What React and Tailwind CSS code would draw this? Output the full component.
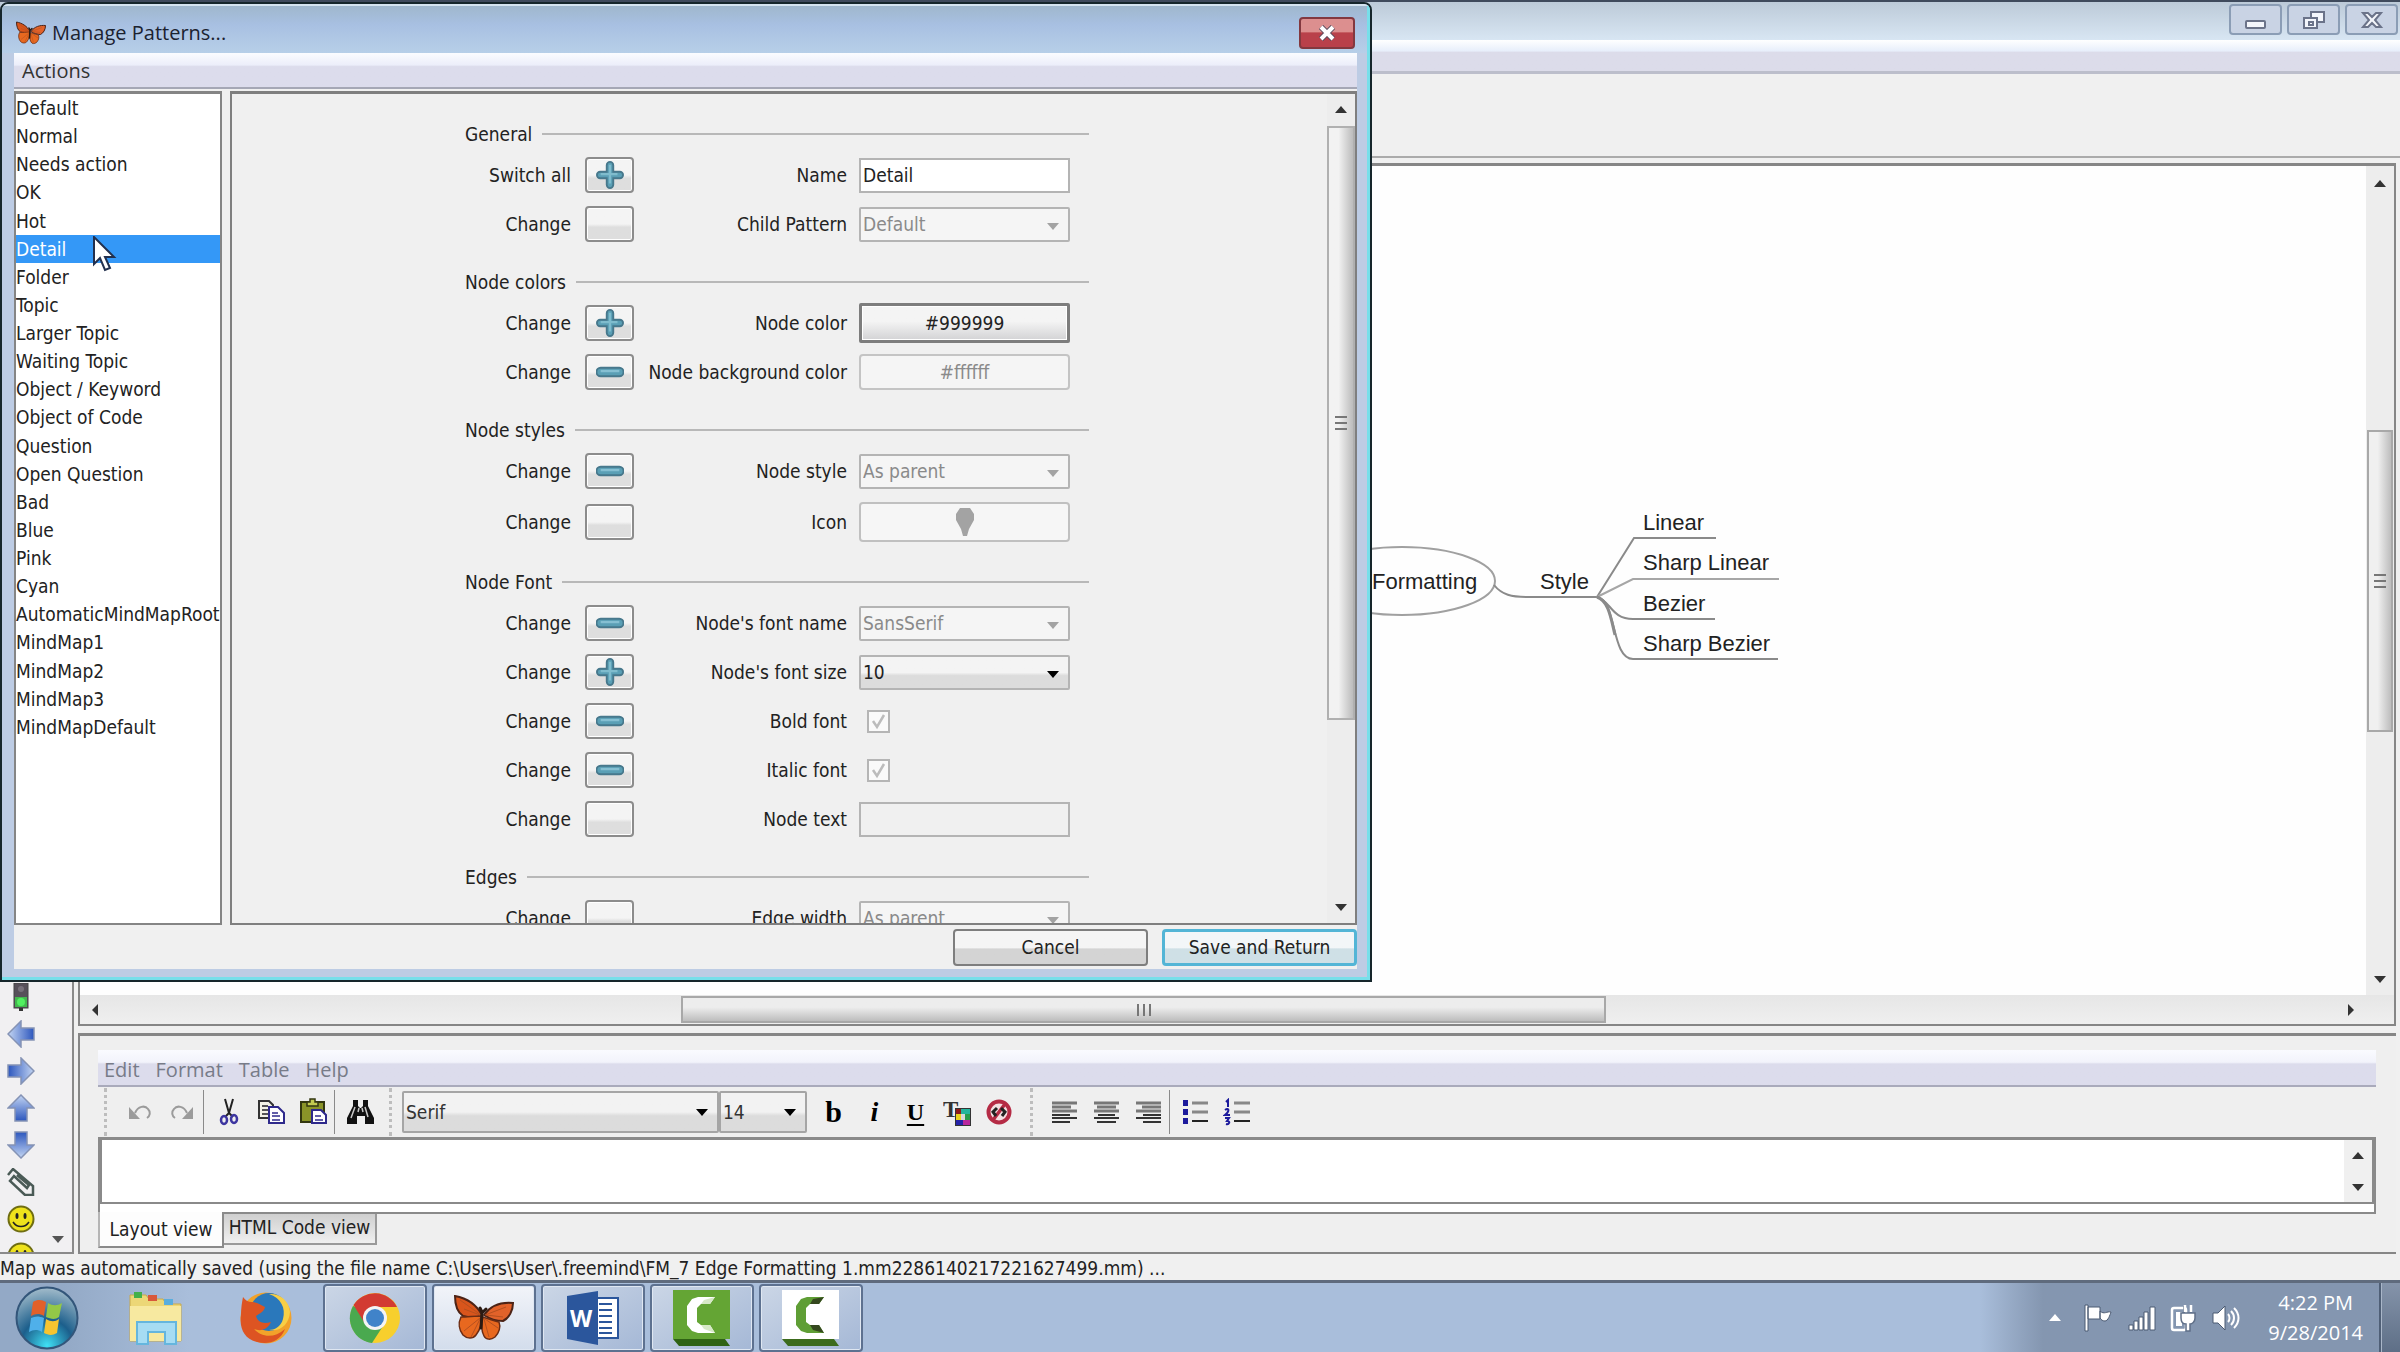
import React from 'react';

const PATTERNS = [
  'Default', 'Normal', 'Needs action', 'OK', 'Hot', 'Detail', 'Folder', 'Topic',
  'Larger Topic', 'Waiting Topic', 'Object / Keyword', 'Object of Code', 'Question',
  'Open Question', 'Bad', 'Blue', 'Pink', 'Cyan', 'AutomaticMindMapRoot',
  'MindMap1', 'MindMap2', 'MindMap3', 'MindMapDefault',
];

const GROUPS = [
  {
    title: 'General',
    rows: [
      { action: 'Switch all', mark: 'plus', label: 'Name', kind: 'text', value: 'Detail' },
      { action: 'Change', mark: '', label: 'Child Pattern', kind: 'select', value: 'Default', disabled: true },
    ],
  },
  {
    title: 'Node colors',
    rows: [
      { action: 'Change', mark: 'plus', label: 'Node color', kind: 'color', value: '#999999' },
      { action: 'Change', mark: 'minus', label: 'Node background color', kind: 'color', value: '#ffffff', disabled: true },
    ],
  },
  {
    title: 'Node styles',
    rows: [
      { action: 'Change', mark: 'minus', label: 'Node style', kind: 'select', value: 'As parent', disabled: true },
      { action: 'Change', mark: '', label: 'Icon', kind: 'icon', disabled: true },
    ],
  },
  {
    title: 'Node Font',
    rows: [
      { action: 'Change', mark: 'minus', label: "Node's font name", kind: 'select', value: 'SansSerif', disabled: true },
      { action: 'Change', mark: 'plus', label: "Node's font size", kind: 'select', value: '10' },
      { action: 'Change', mark: 'minus', label: 'Bold font', kind: 'check', disabled: true },
      { action: 'Change', mark: 'minus', label: 'Italic font', kind: 'check', disabled: true },
      { action: 'Change', mark: '', label: 'Node text', kind: 'text', value: '', disabled: true },
    ],
  },
  {
    title: 'Edges',
    rows: [
      { action: 'Change', mark: '', label: 'Edge width', kind: 'select', value: 'As parent', disabled: true },
    ],
  },
];

const NODES = [
  { text: 'Formatting', x: 71, y: 70 },
  { text: 'Style', x: 239, y: 70 },
  { text: 'Linear', x: 342, y: 11 },
  { text: 'Sharp Linear', x: 342, y: 51 },
  { text: 'Bezier', x: 342, y: 92 },
  { text: 'Sharp Bezier', x: 342, y: 132 },
];

/* ---------- small shared parts ---------- */

const Triangle = ({ dir = 'down', color = '#333' }) => {
  const points = {
    down: '1,4 13,4 7,11',
    up: '1,10 13,10 7,3',
    left: '10,1 10,13 4,7',
    right: '4,1 4,13 10,7',
  };
  return (
    <svg width="14" height="14" viewBox="0 0 14 14" aria-hidden="true" className="shrink-0">
      <polygon points={points[dir]} fill={color} />
    </svg>
  );
};

const Mark = ({ type }) => {
  if (!type) return null;
  const d = type === 'plus'
    ? 'M10.500 3.500a3.500 3.500 0 0 1 7 0v7h7a3.500 3.500 0 0 1 0 7h-7v7a3.500 3.500 0 0 1-7 0v-7h-7a3.500 3.500 0 0 1 0-7h7z'
    : 'M4 9.500h20a4 4 0 0 1 0 9H4a4 4 0 0 1 0-9z';
  return (
    <svg width="28" height="28" viewBox="-1 -1 30 30" fill="none" aria-hidden="true">
      <path d={d} fill="#5a9fb5" stroke="#47788c" strokeWidth="2" />
      {type === 'plus'
        ? <path d="M14 3v20M4 13h18" stroke="#7fbccd" strokeWidth="2.500" />
        : <path d="M4 13h20" stroke="#85bfd2" strokeWidth="2.500" />}
    </svg>
  );
};

const Butterfly = ({ className }) => (
  <svg viewBox="0 0 60 46" aria-hidden="true" className={className}>
    <path d="M28 20C22 9 12 3 1 1c0 8 2 16 8 20 4 1 12 2 19 0z" fill="#d9551c" stroke="#4c2316" strokeWidth="2" />
    <path d="M30 20C37 10 48 7 59 8c0 8-4 15-10 18-6 0-13-2-19-6z" fill="#e2622a" stroke="#4c2316" strokeWidth="2" />
    <path d="M27 21c-6 0-14 1-20 1-3 6-2 13 2 18 4 4 10 4 13 0 4-5 6-12 5-19z" fill="#e8681f" stroke="#6b2c14" strokeWidth="1.500" />
    <path d="M29 22c6 2 11 4 16 5 2 5 0 11-4 15-4 3-9 3-11-1-3-6-3-12-1-19z" fill="#e8681f" stroke="#6b2c14" strokeWidth="1.500" />
    <path d="M27 20L6 5M26 20L10 14M26 23L10 36M26 24l-9 18M31 20L52 12M32 20l17 2M31 24l13 9M30 24l5 18" stroke="#b5501f" strokeWidth="1" fill="none" />
    <path d="M28 17l-1 16M28 17l-2-4M29 17l3-3" stroke="#2b1a12" strokeWidth="3" fill="none" strokeLinecap="round" />
  </svg>
);

const Grip = () => (
  <div className="h-12 w-0 border-l-3 border-dotted border-[#bdbdbd]" />
);

const Divider = () => <div className="h-11 w-px bg-[#8a8a8a]" />;

/* ---------- dialog ---------- */

const FIELD = 'h-[35px] w-[211px] border-2 border-[#b4b4b4] pl-0.5 text-[19px] leading-6';

const Field = ({ row, id }) => {
  if (row.kind === 'text') {
    return (
      <input
        id={id}
        type="text"
        defaultValue={row.value}
        disabled={row.disabled}
        className={`${FIELD} ${row.disabled ? 'bg-[#f0f0f0]' : 'bg-white'}`}
      />
    );
  }
  if (row.kind === 'select') {
    return (
      <div className="relative">
        <select
          id={id}
          disabled={row.disabled}
          className={`${FIELD} appearance-none rounded-xs ${row.disabled ? 'bg-[#f5f5f5] text-[#8a8a8a] opacity-100' : 'bg-linear-to-b from-[#f4f4f4] from-50% to-[#dcdcdc] to-60% text-[#222]'}`}
        >
          <option>{row.value}</option>
        </select>
        <span className="pointer-events-none absolute top-3 right-2.5">
          <Triangle color={row.disabled ? '#a3a3a3' : '#000'} />
        </span>
      </div>
    );
  }
  if (row.kind === 'color') {
    return row.disabled ? (
      <button id={id} type="button" disabled className="h-9 w-[211px] rounded-sm border-2 border-[#c4c4c4] bg-[#f5f5f5] text-[#8a8a8a]">{row.value}</button>
    ) : (
      <button id={id} type="button" className="h-10 w-[211px] rounded-xs border-3 border-[#7d7d7d] bg-linear-to-b from-[#f4f4f4] from-45% to-[#d3d3d5] shadow-[inset_0_0_0_1px_#fff]">{row.value}</button>
    );
  }
  if (row.kind === 'icon') {
    return (
      <button id={id} type="button" disabled className="flex h-10 w-[211px] items-center justify-center rounded-sm border-2 border-[#c0c0c0] bg-[#f6f6f6]">
        <svg width="20" height="30" viewBox="0 0 20 30" aria-hidden="true">
          <path d="M5 1h10l4 6v6l-5 9-2 7H8l-2-7-5-9V7z" fill="#a3a3a3" />
        </svg>
      </button>
    );
  }
  return (
    <div className="flex w-[211px] pl-2">
      <div className="relative size-[23px]">
        <input id={id} type="checkbox" defaultChecked disabled className="block size-[23px] appearance-none border-2 border-[#b5b5b5] bg-[#fafafa]" />
        <svg width="23" height="23" viewBox="0 0 23 23" className="pointer-events-none absolute inset-0" aria-hidden="true">
          <path d="M6 11l4 6 7-12" fill="none" stroke="#bcbcbc" strokeWidth="2.500" />
        </svg>
      </div>
    </div>
  );
};

const FormRow = ({ row, id }) => (
  <div className={`flex items-center ${row.kind === 'icon' ? 'h-10' : 'h-9'}`}>
    <label htmlFor={`${id}-btn`} className="w-[106px] shrink-0 text-right">{row.action}</label>
    <button
      id={`${id}-btn`}
      type="button"
      className="ml-3.5 flex h-9 w-[49px] shrink-0 items-center justify-center rounded-sm border-2 border-[#8c8c8c] bg-linear-to-b from-[#f4f4f4] from-50% to-[#dedede] to-60% shadow-[inset_0_0_0_1px_#fff]"
    >
      <Mark type={row.mark} />
    </button>
    <label htmlFor={id} className="mr-3 grow text-right whitespace-nowrap">{row.label}</label>
    <Field row={row} id={id} />
  </div>
);

const PatternDialog = () => (
  <section className="absolute top-0.5 left-0 flex h-[980px] w-[1372px] flex-col overflow-hidden rounded-t-lg border-2 border-[#16262b] bg-[#bdcce4] text-[19px] leading-6 text-[#222]">
    <div className="flex min-h-0 grow flex-col border-t-2 border-r-3 border-b-3 border-t-[#d5e4f0] border-r-[#77dfea] border-b-[#77dfea] pr-2.5 pb-2 pl-3">
      <header className="-mr-2.5 -ml-3 flex h-[47px] shrink-0 items-center bg-linear-to-b from-[#9fb7cd] via-[#a8c0e2] via-40% to-[#b7cfe8] pt-1.5 pr-3 pl-3.5">
        <Butterfly className="h-6 w-[30px]" />
        <h1 className="ml-1.5 grow text-[20px] text-[#1b2230] [font-family:'Open_Sans',sans-serif]">Manage Patterns...</h1>
        <button type="button" aria-label="Close" className="flex h-8 w-14 items-center justify-center rounded-sm border-2 border-[#83383f] bg-linear-to-b from-[#dc8f8f] from-45% to-[#b9404a] to-50%">
          <svg width="18" height="16" viewBox="0 0 18 16" aria-hidden="true">
            <path d="M3 2l12 12M15 2L3 14" stroke="#5a4a5c" strokeWidth="6" />
            <path d="M3 2l12 12M15 2L3 14" stroke="#fff" strokeWidth="4" />
          </svg>
        </button>
      </header>

      <nav className="flex h-9 shrink-0 items-center border-b-2 border-[#a5a7b5] bg-linear-to-b from-[#fbfcff] via-[#eceefa] via-35% to-[#dcdcec] to-40% pt-0.5 pl-2">
        <button type="button" className="text-[20px] text-[#333] [font-family:'Open_Sans',sans-serif]">Actions</button>
      </nav>

      <div className="flex min-h-0 grow flex-col bg-[#f0f0f0]">
        <div className="flex min-h-0 grow gap-2 pt-0.5">
          <ul role="listbox" aria-label="Patterns" className="flex w-[208px] shrink-0 flex-col border-2 border-t-3 border-[#858585] bg-white pb-[182px]">
            {PATTERNS.map((name) => (
              <li
                key={name}
                role="option"
                aria-selected={name === 'Detail'}
                className={`min-h-7 grow leading-7 whitespace-nowrap ${name === 'Detail' ? 'bg-[#3498f7] text-white' : ''}`}
              >
                {name}
              </li>
            ))}
          </ul>

          <div className="flex min-w-0 grow border-2 border-t-3 border-[#7f7f7f]">
            <div className="min-w-0 grow overflow-hidden pt-[22px] pl-[233px]">
              <form className="w-[624px]">
                {GROUPS.map((g, gi) => (
                  <fieldset key={g.title} className="mb-[22px]">
                    <legend className="flex h-9 w-full items-center gap-2.5">
                      {g.title}
                      <span className="h-0.5 grow bg-[#b8b8b8]" />
                    </legend>
                    <div className="mt-[5px] mr-[19px] flex flex-col gap-[13px]">
                      {g.rows.map((row, ri) => (
                        <FormRow key={row.label} row={row} id={`f-${gi}-${ri}`} />
                      ))}
                    </div>
                  </fieldset>
                ))}
              </form>
            </div>
            <div className="flex w-7 shrink-0 flex-col items-center bg-[#ededed]">
              <div className="flex h-8 items-center"><Triangle dir="up" /></div>
              <div className="flex h-[594px] w-full flex-col items-center justify-center gap-1 border-2 border-[#b0b0b0] bg-linear-to-r from-[#f2f2f2] from-40% to-[#bcbcbc]">
                <i className="h-0.5 w-3 bg-[#777]" />
                <i className="h-0.5 w-3 bg-[#777]" />
                <i className="h-0.5 w-3 bg-[#777]" />
              </div>
              <div className="mt-auto flex h-8 items-center"><Triangle /></div>
            </div>
          </div>
        </div>

        <footer className="flex h-11 shrink-0 items-center justify-end gap-3.5">
          <button type="button" className="h-[37px] w-[195px] rounded-sm border-2 border-[#7e7e7e] bg-linear-to-b from-[#f5f5f5] from-50% to-[#d4d4d4] to-55%">Cancel</button>
          <button type="button" className="h-[37px] w-[195px] rounded-sm border-3 border-[#53b5d6] bg-linear-to-b from-[#f3f6f8] from-50% to-[#cfe0e6] to-55%">Save and Return</button>
        </footer>
      </div>
    </div>

    <svg width="24" height="36" viewBox="0 0 24 36" className="absolute top-[232px] left-[91px]" aria-hidden="true">
      <path d="M1 1v27l6-6 5 12 5-2-5-11h9z" fill="#fff" stroke="#22304e" strokeWidth="2" />
    </svg>
  </section>
);

/* ---------- main window ---------- */

const CaptionButton = ({ label, children }) => (
  <button type="button" aria-label={label} className="flex h-[31px] w-[53px] items-center justify-center rounded-sm border-2 border-[#8b9db5] bg-[#c9d3e4]">
    <svg width="26" height="20" viewBox="0 0 26 20" fill="#f4f6fb" stroke="#6b7389" strokeWidth="2" aria-hidden="true">{children}</svg>
  </button>
);

const MindMap = () => (
  <div className="absolute top-[334px] left-[1221px] h-[170px] w-[500px] text-[22px] leading-6 text-[#222] [font-family:'Liberation_Sans',sans-serif]">
    <svg width="500" height="170" viewBox="0 0 500 170" className="absolute inset-0" fill="none" stroke="#8a8a8a" strokeWidth="2" aria-hidden="true">
      <ellipse cx="101" cy="81" rx="93" ry="34" stroke="#a0a0a0" />
      <path d="M193 85c8 10 18 12 33 12h70L333 38h82" />
      <path d="M296 97l36-18h146" stroke="#a6a6a6" />
      <path d="M296 97c14 4 14 22 36 22h82" />
      <path d="M296 97c20 4 14 62 36 62h145" />
      <path d="M296 97c12 4 14 22 18 38" strokeWidth="3" />
    </svg>
    {NODES.map((n) => (
      <span key={n.text} className="absolute whitespace-nowrap" style={{ left: n.x, top: n.y }}>{n.text}</span>
    ))}
  </div>
);

const MapView = () => (
  <div className="flex min-h-0 grow flex-col border-2 border-t-3 border-[#868686] bg-[#ededed]">
    <div className="flex min-h-0 grow">
      <div className="relative min-w-0 grow overflow-hidden bg-[#fefefe]">
        <MindMap />
      </div>
      <div className="flex w-7 shrink-0 flex-col items-center">
        <div className="flex h-9 items-center"><Triangle dir="up" /></div>
        <div className="mt-[228px] flex h-[302px] w-[26px] flex-col items-center justify-center gap-1 border-2 border-[#a8a8a8] bg-linear-to-r from-[#f0f0f0] from-40% to-[#bdbdbd]">
          <i className="h-0.5 w-3 bg-[#777]" />
          <i className="h-0.5 w-3 bg-[#777]" />
          <i className="h-0.5 w-3 bg-[#777]" />
        </div>
        <div className="mt-auto flex h-8 items-center"><Triangle /></div>
      </div>
    </div>
    <div className="flex h-[29px] shrink-0 items-center bg-linear-to-b from-[#e6e6e6] to-[#efefef] pr-9 pl-2">
      <Triangle dir="left" />
      <div className="ml-[579px] flex h-[27px] w-[925px] items-center justify-center gap-1 border-2 border-[#a8a8a8] bg-linear-to-b from-[#ededed] from-40% to-[#bdbdbd]">
        <i className="h-3 w-0.5 bg-[#777]" />
        <i className="h-3 w-0.5 bg-[#777]" />
        <i className="h-3 w-0.5 bg-[#777]" />
      </div>
      <div className="ml-auto flex"><Triangle dir="right" /></div>
    </div>
  </div>
);

const ToolButton = ({ label, children }) => (
  <button type="button" aria-label={label} className="flex h-9 w-[42px] shrink-0 items-center justify-center">
    <svg width="28" height="28" viewBox="0 0 28 28" fill="none" aria-hidden="true">{children}</svg>
  </button>
);

const LetterButton = ({ label, className, children }) => (
  <button type="button" aria-label={label} className={`flex h-9 w-[41px] shrink-0 items-center justify-center leading-7 font-bold text-black [font-family:'Liberation_Serif',serif] ${className}`}>
    {children}
  </button>
);

const ToolSelect = ({ label, value, className }) => (
  <div className="relative">
    <select aria-label={label} className={`h-[42px] appearance-none rounded-xs border-2 border-[#a5a5a5] bg-linear-to-b from-[#f2f2f2] from-50% to-[#dcdcdc] to-60% pl-0.5 text-[#333] ${className}`}>
      <option>{value}</option>
    </select>
    <span className="pointer-events-none absolute top-3.5 right-2.5"><Triangle color="#000" /></span>
  </div>
);

const EditorToolbar = () => (
  <div className="flex h-[50px] items-center pl-1.5">
    <Grip />
    <div className="w-3" />
    <ToolButton label="Undo">
      <path d="M9 15C12 8 19 7 22 11c3 3 2 7-1 9" stroke="#9b9b9b" strokeWidth="2" />
      <path d="M3 9v12h11z" fill="#9b9b9b" />
    </ToolButton>
    <ToolButton label="Redo">
      <path d="M19 15C16 8 9 7 6 11c-3 3-2 7 1 9" stroke="#9b9b9b" strokeWidth="2" />
      <path d="M25 9v12H14z" fill="#9b9b9b" />
    </ToolButton>
    <Divider />
    <div className="w-1" />
    <ToolButton label="Cut">
      <path d="M10 1l4 14 4 4M18 1l-4 14-4 4" stroke="#222" strokeWidth="2" />
      <ellipse cx="9" cy="22" rx="3" ry="4" stroke="#3d35a0" strokeWidth="2.500" />
      <ellipse cx="19" cy="21" rx="3" ry="4" stroke="#3d35a0" strokeWidth="2.500" />
    </ToolButton>
    <ToolButton label="Copy">
      <path d="M2 3h10l4 4v13H2z" fill="#f3f3e6" stroke="#333" strokeWidth="2" />
      <path d="M5 8h6M5 12h6M5 16h6" stroke="#555" strokeWidth="2" />
      <path d="M12 9h9l6 6v10H12z" fill="#fff" stroke="#2f2a8c" strokeWidth="2" />
      <path d="M15 15h6M15 18h8M15 22h8" stroke="#2f2a8c" strokeWidth="1.500" />
    </ToolButton>
    <ToolButton label="Paste">
      <path d="M2 4h23v20H2z" fill="#8a9428" stroke="#333710" strokeWidth="2" />
      <path d="M8 8V4h3V1h5v3h3v4z" fill="#c3cb50" stroke="#333710" strokeWidth="1.500" />
      <path d="M13 12h9l5 5v8H13z" fill="#fff" stroke="#2f2a8c" strokeWidth="2" />
      <path d="M16 18h6M16 22h8" stroke="#2f2a8c" strokeWidth="1.500" />
    </ToolButton>
    <Divider />
    <div className="w-1" />
    <ToolButton label="Find">
      <path d="M7 2h5v6l2 2h1l2-2V2h5v6l6 12v6h-9v-8h-8v8H1v-6L7 8z" fill="#111" />
      <path d="M9 9L5 20M19 9l3 10M12 14l1-4M17 14l-1-4" stroke="#c9c9c9" strokeWidth="1.500" />
    </ToolButton>
    <div className="w-2" />
    <Grip />
    <div className="w-2.5" />
    <ToolSelect label="Font" value="Serif" className="w-[317px]" />
    <ToolSelect label="Font size" value="14" className="w-[88px]" />
    <div className="w-1.5" />
    <LetterButton label="Bold" className="text-[30px]">b</LetterButton>
    <LetterButton label="Italic" className="text-[28px] italic">i</LetterButton>
    <LetterButton label="Underline" className="text-[24px] underline underline-offset-4">U</LetterButton>
    <ToolButton label="Text color">
      <text x="0" y="19" fontSize="23" fontFamily="Liberation Serif" fontWeight="700" fill="#333">T</text>
      <path d="M12 10h16v18H12z" fill="#333" />
      <path d="M13 11h5v5h-5z" fill="#8c1a1a" />
      <path d="M18 11h9v5h-9z" fill="#23b59c" />
      <path d="M13 16h5v6h-5z" fill="#e8d21c" />
      <path d="M18 16h4v6h-4z" fill="#d8d8d8" />
      <path d="M22 16h5v6h-5z" fill="#2a9c4a" />
      <path d="M13 22h7v5h-7z" fill="#2522a8" />
      <path d="M20 22h7v5h-7z" fill="#b8269c" />
    </ToolButton>
    <ToolButton label="Clear formatting">
      <circle cx="14" cy="14" r="10.500" fill="#f3dfe2" stroke="#b52b45" strokeWidth="4" />
      <path d="M20 6L8 22" stroke="#b52b45" strokeWidth="3.500" />
      <path d="M12 10l-4 4 3 4M16 10l4 4-3 4" stroke="#222" strokeWidth="3" />
    </ToolButton>
    <div className="w-2.5" />
    <Grip />
    <div className="w-2.5" />
    <ToolButton label="Align left">
      <path d="M2 5h25M2 9h19M2 13h25" stroke="#777" strokeWidth="3" />
      <path d="M2 17h18M2 20h25M2 24h18" stroke="#333" strokeWidth="2" />
    </ToolButton>
    <ToolButton label="Align center">
      <path d="M2 5h25M5 9h19M2 13h25" stroke="#777" strokeWidth="3" />
      <path d="M6 17h17M2 20h25M5 24h19" stroke="#333" strokeWidth="2" />
    </ToolButton>
    <ToolButton label="Align right">
      <path d="M2 5h25M8 9h19M2 13h25" stroke="#777" strokeWidth="3" />
      <path d="M9 17h18M2 20h25M9 24h18" stroke="#333" strokeWidth="2" />
    </ToolButton>
    <Divider />
    <div className="w-1" />
    <ToolButton label="Bulleted list">
      <path d="M2 2h5v6H2zM2 11h5v6H2zM2 20h5v6H2z" fill="#1c1a9c" />
      <path d="M11 5h16M11 14h16" stroke="#888" strokeWidth="3" />
      <path d="M11 23h16" stroke="#222" strokeWidth="2" />
    </ToolButton>
    <ToolButton label="Numbered list">
      <path d="M3 4l2-2v7M2 12c4-3 5 1 0 5h5M2 20h4l-2 3c4 0 2 4-1 3" stroke="#1c1a9c" strokeWidth="2" />
      <path d="M11 5h16M11 14h16" stroke="#888" strokeWidth="3" />
      <path d="M11 23h16" stroke="#222" strokeWidth="2" />
    </ToolButton>
  </div>
);

const NoteEditor = () => (
  <div className="h-[221px] shrink-0 border-t-3 border-b-2 border-l-2 border-[#868686] bg-[#efefef] pt-3.5 pr-5 pl-[18px]">
    <nav className="flex h-[37px] items-center gap-4 border-b-2 border-[#a9aabb] bg-linear-to-b from-[#fafbff] via-[#f2f3fb] via-35% to-[#dcdcec] to-40% pt-1 pl-1.5 text-[20px] text-[#777b88] [font-family:'Open_Sans',sans-serif]">
      {['Edit', 'Format', 'Table', 'Help'].map((m) => <button key={m} type="button">{m}</button>)}
    </nav>
    <EditorToolbar />
    <div className="h-[77px] border-2 border-t-3 border-[#8a8a8a] bg-white">
      <div className="flex h-16 border-b-2 border-l-2 border-[#8a8a8a]">
        <textarea aria-label="Note" rows={1} className="block h-full grow resize-none bg-white p-2 outline-none" />
        <div className="flex w-[30px] flex-col items-center justify-around border-r-2 border-[#8a8a8a] bg-[#f0f0f0]">
          <Triangle dir="up" />
          <Triangle />
        </div>
      </div>
    </div>
    <div role="tablist" className="flex items-start leading-6 text-[#222]">
      <button role="tab" aria-selected="true" type="button" className="relative -mt-0.5 h-9 w-[126px] border-2 border-t-0 border-[#8a8a8a] border-l-[#b5b5b5] bg-[#fdfdfd]">Layout view</button>
      <button role="tab" aria-selected="false" type="button" className="h-[31px] w-[153px] border-r-2 border-b-2 border-[#9a9a9a] bg-linear-to-b from-[#cfcfcf] to-[#f0f0f0] pb-1">HTML Code view</button>
    </div>
  </div>
);

const Smiley = () => (
  <>
    <circle cx="14" cy="14" r="12.500" fill="#eee21c" stroke="#6f6d12" strokeWidth="2" />
    <ellipse cx="10" cy="11" rx="1.500" ry="3" fill="#222" />
    <ellipse cx="18" cy="11" rx="1.500" ry="3" fill="#222" />
    <path d="M6 17c4 6 12 6 16 0" fill="none" stroke="#222" strokeWidth="1.500" />
  </>
);

const Arrow = ({ angle, id }) => (
  <>
    <defs>
      <linearGradient id={id} x1="0" x2="1" y1="0" y2="0">
        <stop offset="0" stopColor="#c3d5f3" />
        <stop offset="1" stopColor="#2c56bd" />
      </linearGradient>
    </defs>
    <path d="M1 14L14 1v7h13v12H14v7z" fill={`url(#${id})`} stroke="#8593b5" strokeWidth="1.500" transform={`rotate(${angle} 14 14)`} />
  </>
);

const ICON_BAR = [
  ['Traffic light', (
    <>
      <rect x="7" y="0" width="14" height="25" fill="#57505a" stroke="#444" />
      <circle cx="14" cy="6" r="3" fill="#77707a" />
      <path d="M8 14h12v10H8z" fill="#43b84e" />
      <circle cx="14" cy="19" r="4" fill="#52f060" />
      <path d="M12 25h4v3h-4z" fill="#333" />
    </>
  )],
  ['Back', <Arrow id="arrow-back" angle={0} />],
  ['Forward', <Arrow id="arrow-forward" angle={180} />],
  ['Up', <Arrow id="arrow-up" angle={90} />],
  ['Down', <Arrow id="arrow-down" angle={270} />],
  ['Attachment', (
    <path d="M1 7L6 1l20 17v9h-8L3 13l4-5 13 12 2-3L10 7" fill="none" stroke="#4a5a56" strokeWidth="2.500" />
  )],
  ['Smile', <Smiley />],
  ['Smile more', <Smiley />],
];

const IconBar = () => (
  <aside className="flex w-[74px] shrink-0 items-end overflow-hidden border-r-2 border-b-2 border-[#8a8a8a] bg-[#f1f0f2] pl-[7px]">
    <div className="-mb-[22px]">
      {ICON_BAR.map(([label, art]) => (
        <button key={label} type="button" aria-label={label} className="flex h-[37px] items-center">
          <svg width="28" height="28" viewBox="0 0 28 28" aria-hidden="true">{art}</svg>
        </button>
      ))}
    </div>
    <div className="mb-1 ml-auto flex h-4 w-7 justify-center"><Triangle color="#555" /></div>
  </aside>
);

/* ---------- taskbar ---------- */

const TaskButton = ({ label, active, children }) => (
  <button
    type="button"
    aria-label={label}
    className={`flex h-[68px] w-[104px] items-center justify-center rounded-sm border-2 border-[#5d7190] ${active ? 'bg-linear-to-b from-[#f2f4f9] to-[#d3ddec]' : 'bg-linear-to-br from-[#cbd6e6] to-[#a5b8d6]'} shadow-[inset_0_0_0_1px_#dfe7f2]`}
  >
    {children}
  </button>
);

const Taskbar = () => (
  <footer className="flex h-[72px] shrink-0 items-center border-t-3 border-[#5f6b7d] bg-[#a9bedb]">
    <div className="flex h-full w-[316px] shrink-0 items-center bg-linear-to-r from-[#93a9c6] from-20% to-[#a9bedb] to-60%">
      <button type="button" aria-label="Start" className="ml-[15px]">
        <svg width="64" height="64" viewBox="0 0 64 64" aria-hidden="true">
          <defs>
            <radialGradient id="orb" cx="50%" cy="95%" r="95%">
              <stop offset="0" stopColor="#3fe0f5" />
              <stop offset="0.450" stopColor="#1c5f8c" />
              <stop offset="1" stopColor="#a3bccb" />
            </radialGradient>
          </defs>
          <circle cx="32" cy="32" r="30.500" fill="url(#orb)" stroke="#33567a" strokeWidth="2" />
          <path d="M18 16c5-3 9-2 13 0l-2 14c-5-3-9-2-13 0z" fill="#e2602a" />
          <path d="M33 17c5 3 9 3 14 0l-3 14c-4 3-8 2-13 0z" fill="#94c847" />
          <path d="M16 32c4-2 8-2 13 0l-2 14c-5-3-9-2-13 0z" fill="#4fb0ea" />
          <path d="M31 33c5 3 9 3 13 0l-2 14c-5 3-9 2-13 0z" fill="#f6c430" />
        </svg>
      </button>
      <button type="button" aria-label="Explorer" className="ml-[49px]">
        <svg width="56" height="54" viewBox="0 0 56 54" aria-hidden="true">
          <path d="M2 4h16l3 4h14l3 5h15v37H2z" fill="#ecd777" stroke="#c6a94c" />
          <path d="M6 1h8v6H6z" fill="#43b04a" />
          <path d="M20 4h9v6h-9z" fill="#d8583a" />
          <path d="M36 8h9v6h-9z" fill="#5aaede" />
          <path d="M2 15h51v35H2z" fill="#f7e9a0" />
          <path d="M9 53V31h39v22H37V41H20v12z" fill="#a6dcf3" stroke="#65b6de" strokeWidth="2" />
        </svg>
      </button>
      <button type="button" aria-label="Firefox" className="ml-[55px]">
        <svg width="54" height="54" viewBox="0 0 54 54" aria-hidden="true">
          <circle cx="27" cy="27" r="25.500" fill="#f2a22a" />
          <circle cx="30" cy="21" r="19" fill="#2a78bb" />
          <path d="M30 3c12 4 17 14 14 25-2 8-9 11-14 11 12 2 20-6 21-18C50 9 40 2 30 3z" fill="#f8cf45" />
          <path d="M4 6c2 3 5 5 9 5 5 0 9 3 13 5-1 5-5 6-9 9 2 7 8 8 15 6-3 7-10 10-17 7 7 8 20 10 31 0-5 13-17 16-28 13C6 48 0 38 2 24c0-7 1-13 2-18z" fill="#dd5422" />
        </svg>
      </button>
    </div>

    <div className="ml-[7px] flex gap-[5px]">
      <TaskButton label="Chrome">
        <svg width="52" height="52" viewBox="0 0 52 52" aria-hidden="true">
          <circle cx="26" cy="26" r="25" fill="#f7cf2d" />
          <path d="M26 26L4 14a25 25 0 0 0 19 37z" fill="#4aa94f" />
          <path d="M23 51l13-20-10-5-22-12 12 26z" fill="#4aa94f" />
          <path d="M26 15h22A25 25 0 0 0 4.500 13L15 30z" fill="#d23b32" />
          <circle cx="26" cy="26" r="12" fill="#f4f4f4" />
          <circle cx="26" cy="26" r="9" fill="#4083c9" />
        </svg>
      </TaskButton>
      <TaskButton label="FreeMind" active><Butterfly className="h-[46px] w-[60px]" /></TaskButton>
      <TaskButton label="Word">
        <svg width="54" height="54" viewBox="0 0 54 54" aria-hidden="true">
          <path d="M30 7h22v40H30z" fill="#fff" stroke="#2b569c" strokeWidth="2" />
          <path d="M33 13h13M33 19h13M33 25h13M33 31h13M33 37h13M33 42h13" stroke="#2b569c" strokeWidth="2" />
          <path d="M1 5l31-5v54L1 48z" fill="#2b569c" />
          <text x="4" y="36" fontSize="23" fontWeight="700" fontFamily="Open Sans" fill="#fff">W</text>
        </svg>
      </TaskButton>
      <TaskButton label="Camtasia Studio">
        <svg width="58" height="58" viewBox="0 0 58 58" aria-hidden="true">
          <path d="M0 1h57v49H0z" fill="#64a534" />
          <path d="M0 50h52l5 7H6z" fill="#2f6314" />
          <path d="M42 8H25l-6 2-5 7v19l5 6 6 2h17l-5-8h-9l-4-3V19l4-4h9z" fill="#fff" />
          <path d="M42 8l-5 7h-9l3-4zM42 44l-5-8h-9l3 4z" fill="#d6e8c6" />
        </svg>
      </TaskButton>
      <TaskButton label="Camtasia Recorder">
        <svg width="58" height="58" viewBox="0 0 58 58" aria-hidden="true">
          <path d="M0 1h57v49H0z" fill="#fff" />
          <path d="M0 50h52l5 7H6z" fill="#3c6b1c" />
          <path d="M42 8H25l-6 2-5 7v19l5 6 6 2h17l-5-8h-9l-4-3V19l4-4h9z" fill="#5f9e35" />
          <path d="M42 8l-5 7h-9l3-5zM42 44l-5-8h-9l3 5z" fill="#35481f" />
        </svg>
      </TaskButton>
    </div>

    <div className="ml-auto flex h-full items-center bg-linear-to-r from-[#a9bedb] to-[#8496b0] to-15% pl-[68px] text-white">
      <button type="button" aria-label="Show hidden icons" className="flex w-4"><Triangle dir="up" color="#fff" /></button>
      <button type="button" aria-label="Action center" className="ml-5">
        <svg width="28" height="28" viewBox="0 0 28 28" fill="#fff" stroke="#4b5a72" aria-hidden="true">
          <path d="M1 1h3v26H1zM4 3h12v12H4zM16 7c4 4 7 0 11 1-1 3-3 9-6 9-2 0-4-1-5-3z" />
        </svg>
      </button>
      <button type="button" aria-label="Network" className="ml-4">
        <svg width="28" height="28" viewBox="0 0 28 28" fill="#fff" stroke="#4b5a72" aria-hidden="true">
          <path d="M1 21h4v5H1zM6 17h4v9H6zM11 13h4v13h-4zM16 8h4v18h-4zM22 3h5v23h-5z" />
        </svg>
      </button>
      <button type="button" aria-label="Power" className="ml-3.5">
        <svg width="28" height="28" viewBox="0 0 28 28" aria-hidden="true">
          <rect x="2" y="4" width="14" height="22" rx="2" fill="none" stroke="#fff" strokeWidth="2.500" />
          <path d="M6 8h6v14H6z" fill="#fff" />
          <path d="M14 2v7M21 2v7M11 9h14v5c0 4-3 6-5 6v7h-4v-7c-3 0-5-2-5-6z" fill="#fff" stroke="#5f6f88" strokeWidth="1.500" />
          <path d="M15 1v7M21 1v7" stroke="#fff" strokeWidth="2.500" />
        </svg>
      </button>
      <button type="button" aria-label="Volume" className="ml-3.5">
        <svg width="28" height="28" viewBox="0 0 28 28" aria-hidden="true">
          <path d="M1 9h5l7-7v24l-7-7H1z" fill="#fff" stroke="#4b5a72" />
          <path d="M16 10c2 2 2 6 0 8M19 7c4 4 4 10 0 14M22 4c6 6 6 14 0 20" fill="none" stroke="#fff" strokeWidth="2" />
        </svg>
      </button>
      <time className="mr-4 ml-7 text-center text-[20px] leading-[30px] [font-family:'Open_Sans',sans-serif]">
        4:22 PM<br />9/28/2014
      </time>
      <button type="button" aria-label="Show desktop" className="h-full w-[21px] border-l-2 border-[#4f5f76] bg-linear-to-b from-[#8594aa] to-[#5e6f87] shadow-[inset_1px_0_0_#a9b6c8]" />
    </div>
  </footer>
);

export default function App() {
  return (
    <div className="relative flex h-screen flex-col overflow-hidden bg-[#f0f0f0] text-[19px] text-[#222] [font-family:'DejaVu_Sans_Condensed','Open_Sans',sans-serif]">
      <header className="flex h-10 shrink-0 justify-end gap-[5px] border-t-2 border-[#3f4a5c] bg-linear-to-b from-[#bccad8] to-[#d8e6f3] pt-0.5 pr-0.5">
        <CaptionButton label="Minimize"><rect x="3" y="11" width="19" height="7" rx="1" /></CaptionButton>
        <CaptionButton label="Restore">
          <rect x="10" y="2" width="13" height="10" />
          <rect x="3" y="8" width="13" height="10" />
          <rect x="8" y="12" width="4" height="3" />
        </CaptionButton>
        <CaptionButton label="Close window">
          <path d="M4 3h5l4 4 4-4h5l-6 7 6 7h-5l-4-4-4 4H4l6-7z" />
        </CaptionButton>
      </header>
      <div className="h-[34px] shrink-0 border-b-3 border-[#bcbecb] bg-linear-to-b from-white via-[#e8effb] via-35% to-[#dcdcea] to-40%" />
      <div className="h-[84px] shrink-0 border-b-2 border-[#ababab]" />

      <main className="flex min-h-0 grow gap-1 pt-[5px] pr-1">
        <IconBar />
        <div className="flex min-w-0 grow flex-col gap-[7px]">
          <MapView />
          <NoteEditor />
        </div>
      </main>

      <p className="h-[26px] shrink-0 leading-[28px] whitespace-nowrap">
        Map was automatically saved (using the file name C:\Users\User\.freemind\FM_7 Edge Formatting 1.mm2286140217221627499.mm) ...
      </p>
      <Taskbar />
      <PatternDialog />
    </div>
  );
}
